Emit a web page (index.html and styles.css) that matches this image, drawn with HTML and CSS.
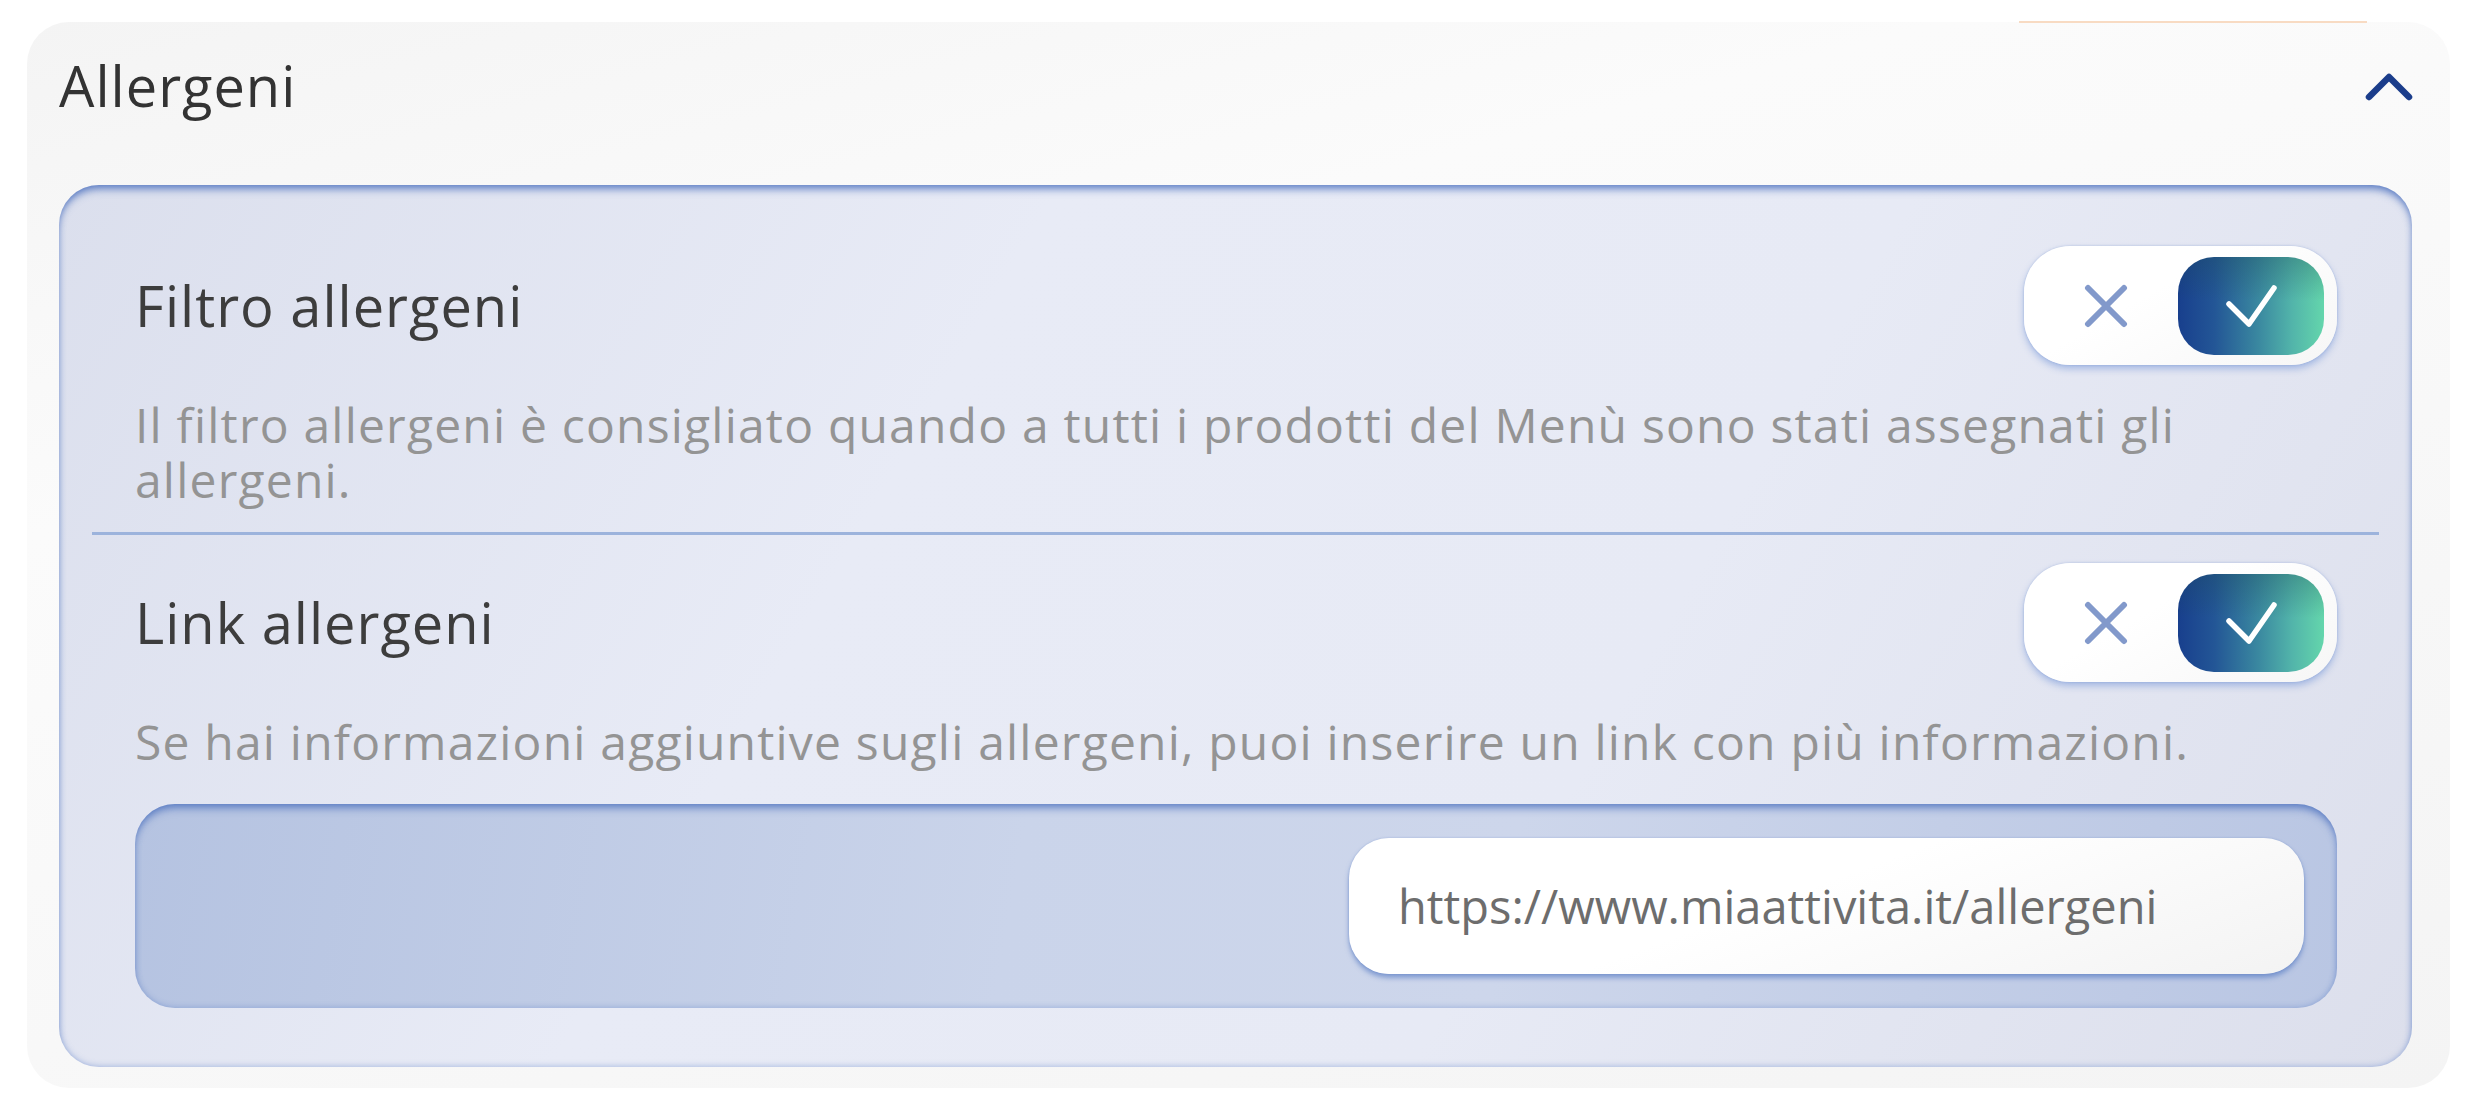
FILE: index.html
```html
<!DOCTYPE html>
<html>
<head>
    <title>Allergeni</title>
    <link rel="stylesheet" href="styles.css">
</head>
<body>
    <div class="card">
        <div class="card-header">
            <h2 class="card-title">Allergeni</h2>
            <svg class="chevron" width="48" height="30" viewBox="0 0 48 30">
                <polyline points="4,26 24,6 44,26" fill="none" stroke="#1b3d8b" stroke-width="6.5" stroke-linecap="round" stroke-linejoin="round"/>
            </svg>
        </div>

        <div class="panel">
            <div class="setting-row">
                <span class="setting-title">Filtro allergeni</span>
                <div class="toggle">
                    <div class="toggle-off">
                        <svg width="46" height="44" viewBox="0 0 46 44">
                            <path d="M5 4 L41 40 M41 4 L5 40" stroke="#8299cb" stroke-width="6" stroke-linecap="round"/>
                        </svg>
                    </div>
                    <div class="toggle-on">
                        <svg width="56" height="46" viewBox="0 0 56 46">
                            <polyline points="6,21 26,41 51,5" fill="none" stroke="#fff" stroke-width="5.5" stroke-linecap="round" stroke-linejoin="round"/>
                        </svg>
                    </div>
                </div>
            </div>
            <p class="setting-desc">Il filtro allergeni è consigliato quando a tutti i prodotti del Menù sono stati assegnati gli allergeni.</p>

            <div class="divider"></div>

            <div class="setting-row">
                <span class="setting-title">Link allergeni</span>
                <div class="toggle">
                    <div class="toggle-off">
                        <svg width="46" height="44" viewBox="0 0 46 44">
                            <path d="M5 4 L41 40 M41 4 L5 40" stroke="#8299cb" stroke-width="6" stroke-linecap="round"/>
                        </svg>
                    </div>
                    <div class="toggle-on">
                        <svg width="56" height="46" viewBox="0 0 56 46">
                            <polyline points="6,21 26,41 51,5" fill="none" stroke="#fff" stroke-width="5.5" stroke-linecap="round" stroke-linejoin="round"/>
                        </svg>
                    </div>
                </div>
            </div>
            <p class="setting-desc">Se hai informazioni aggiuntive sugli allergeni, puoi inserire un link con più informazioni.</p>

            <div class="link-box">
                <input class="link-input" type="text" value="https://www.miaattivita.it/allergeni" readonly>
            </div>
        </div>
    </div>
</body>
</html>
```

FILE: styles.css
```css
body {
    margin: 0;
    padding: 22px 36px 30px 27px;
    background-color: #ffffff;
    font-family: "Open Sans", "Liberation Sans", sans-serif;
}

.card {
    position: relative;
    border-radius: 42px;
    padding: 0 38px 21px 32px;
    background: linear-gradient(165deg, #f4f4f4 0%, #fbfbfb 30%, #f8f8f8 60%, #f4f4f4 100%);
}

/* peach edge of the element behind the card */
.card::before {
    content: "";
    position: absolute;
    top: -1px;
    right: 83px;
    width: 348px;
    height: 2px;
    background-color: #f8dbc3;
}

.card-header {
    display: flex;
    align-items: center;
    justify-content: space-between;
    padding-top: 30px;
    margin-bottom: 66px;
}

.card-title {
    margin: 0;
    font-size: 56px;
    line-height: 67px;
    font-weight: 400;
    letter-spacing: 1px;
    color: #333333;
}

.chevron {
    display: block;
    margin-right: -1px;
}

.panel {
    border-radius: 40px;
    padding: 61px 75px 59px 76px;
    background: linear-gradient(120deg, #dbdfed 0%, #e8ebf6 35%, #e7eaf5 65%, #dcdfec 100%);
    box-shadow: inset 0 7px 9px -3px rgba(60, 100, 185, 0.7), inset 0 0 6px rgba(80, 118, 195, 0.5);
}

.setting-row {
    display: flex;
    align-items: center;
    justify-content: space-between;
}

.setting-title {
    font-size: 56px;
    line-height: 67px;
    letter-spacing: 1px;
    color: #3d3d3d;
}

.setting-desc {
    margin: 32px 0 0;
    font-size: 48px;
    line-height: 55px;
    letter-spacing: 1.2px;
    color: #949494;
}

.divider {
    height: 3px;
    margin: 25px -42px 28px -43px;
    background-color: #9cb3dc;
}

.toggle {
    display: flex;
    align-items: center;
    box-sizing: border-box;
    width: 313px;
    height: 119px;
    padding: 0 13px 0 10px;
    border-radius: 46px;
    background: linear-gradient(150deg, #ffffff 40%, #f6f6f6 100%);
    box-shadow: 0 4px 7px rgba(90, 130, 210, 0.45), 0 0 2px rgba(120, 150, 210, 0.5);
}

.toggle-off {
    flex: 1;
    display: flex;
    justify-content: center;
}

.toggle-on {
    display: flex;
    align-items: center;
    justify-content: center;
    width: 146px;
    height: 98px;
    border-radius: 36px;
    background:
        linear-gradient(180deg, rgba(25, 70, 80, 0.3) 0%, rgba(25, 70, 80, 0) 45%),
        linear-gradient(90deg, #183f8d 0%, #235696 25%, #3a88a0 55%, #52b4aa 78%, #64d6ac 100%);
}

.toggle svg {
    display: block;
}

.link-box {
    display: flex;
    justify-content: flex-end;
    margin-top: 35px;
    padding: 34px 33px;
    border-radius: 40px;
    background: linear-gradient(100deg, #b5c3e1 0%, #cad4ea 40%, #cdd6eb 62%, #b9c6e3 100%);
    box-shadow: inset 0 7px 9px -3px rgba(60, 100, 185, 0.65), inset 0 0 6px rgba(80, 118, 195, 0.45);
}

.link-input {
    box-sizing: border-box;
    width: 955px;
    height: 136px;
    padding: 0 49px;
    border: none;
    border-radius: 40px;
    outline: none;
    font-family: "Open Sans", "Liberation Sans", sans-serif;
    font-size: 47px;
    color: #6d6d6d;
    background: linear-gradient(160deg, #ffffff 45%, #f3f3f3 100%);
    box-shadow: 0 4px 5px rgba(70, 110, 190, 0.55), 0 0 2px rgba(90, 125, 195, 0.4);
}
```
